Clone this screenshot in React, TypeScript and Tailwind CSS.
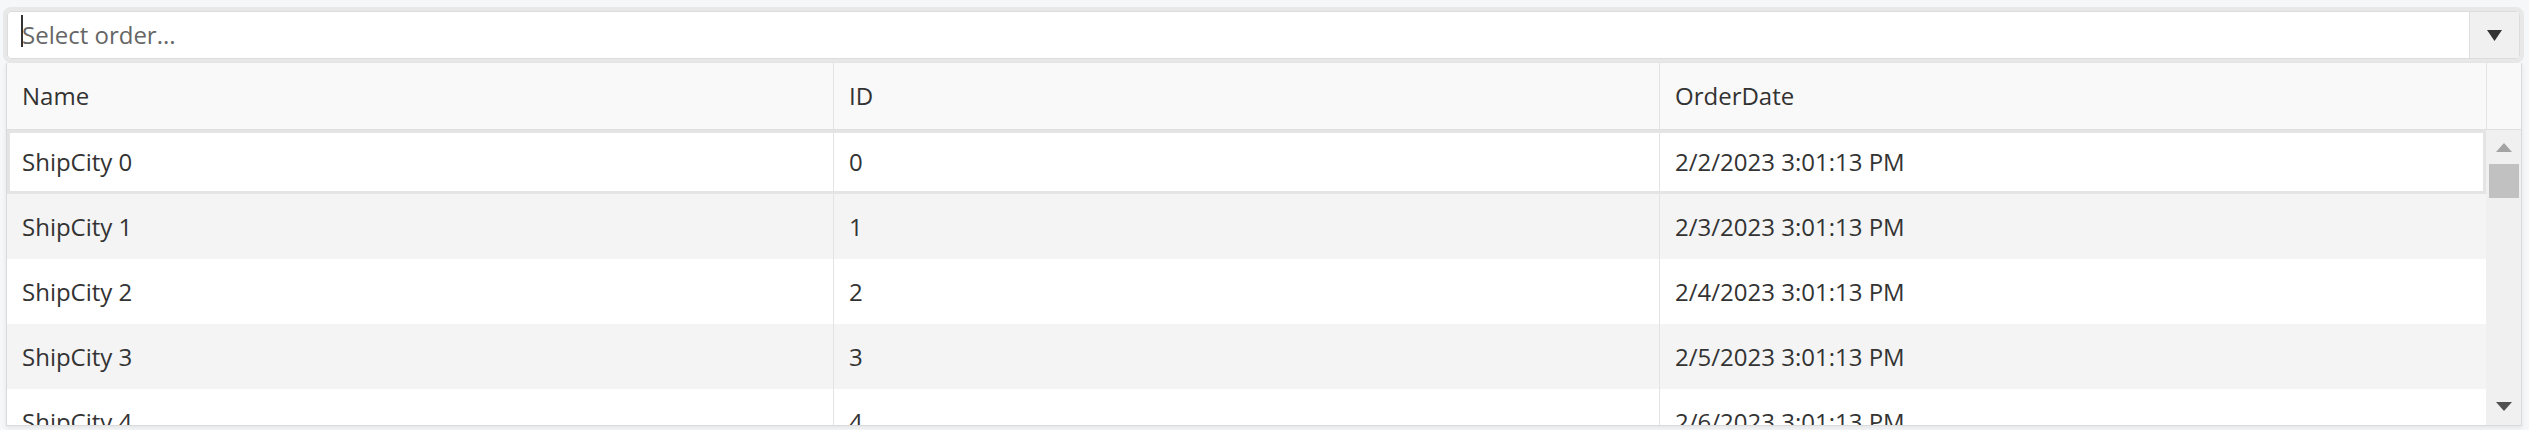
import React from 'react';

type Order = {
  name: string;
  id: number;
  orderDate: string;
};

const ORDERS: Order[] = Array.from({ length: 5 }, (_, i) => ({
  name: `ShipCity ${i}`,
  id: i,
  orderDate: `2/${i + 2}/2023 3:01:13 PM`,
}));

const COLUMNS = [
  { key: 'name', label: 'Name', width: 'w-[826px]' },
  { key: 'id', label: 'ID', width: 'w-[826px] border-l border-[#e3e3e3]' },
  { key: 'orderDate', label: 'OrderDate', width: 'w-[827px] border-l border-[#e3e3e3]' },
] as const;

function ComboInput() {
  return (
    <div className="ml-[3px] mr-[5px] h-[56px] rounded-[8px] border-4 border-[#e8e8e8]">
      <div className="flex h-full rounded-[4px] border border-[#dcdcdc] bg-white overflow-hidden">
        <div className="flex-1 flex items-center pl-[14px]">
          <span className="relative text-[#666] text-[24px] leading-none">
            {/* text caret */}
            <span className="absolute -left-[1px] top-[-8px] w-[2px] h-[32px] bg-[#333]" />
            Select order...
          </span>
        </div>
        <button
          type="button"
          className="w-[50px] flex items-center justify-center border-l border-[#dedede] bg-[#f0f0f0]"
        >
          <svg width="15" height="11" viewBox="0 0 15 11">
            <polygon points="0,0 15,0 7.5,11" fill="#333" />
          </svg>
        </button>
      </div>
    </div>
  );
}

function ScrollBar() {
  return (
    <div className="w-[35px] flex flex-col items-center bg-[#f0f0f0] pt-[13px] pb-[14px]">
      <svg width="16" height="9" viewBox="0 0 16 9">
        <polygon points="8,0 16,9 0,9" fill="#a3a3a3" />
      </svg>
      <div className="mt-[12px] w-[30px] h-[34px] bg-[#c1c1c1]" />
      <div className="flex-1" />
      <svg width="16" height="9" viewBox="0 0 16 9">
        <polygon points="0,0 16,0 8,9" fill="#505050" />
      </svg>
    </div>
  );
}

function OrderGrid() {
  return (
    <div className="ml-[6px] mr-[7px] border-x border-b border-[#dadada] bg-white shadow-[0_2px_5px_rgba(0,0,0,0.08)]">
      {/* Header */}
      <div className="flex h-[67px] bg-[#f9f9f9] border-b border-[#e0e0e0]">
        {COLUMNS.map((col) => (
          <div key={col.key} className={`${col.width} flex items-center pl-[15px] text-[#333]`}>
            {col.label}
          </div>
        ))}
        <div className="w-[35px] border-l border-[#e3e3e3]" />
      </div>

      {/* Body */}
      <div className="flex h-[295px] overflow-hidden">
        <div className="flex-1">
          {ORDERS.map((order, index) => (
            <div
              key={order.id}
              className={`flex ${index === 0 ? 'h-[64px] shadow-[inset_0_0_0_3px_#e4e4e4]' : 'h-[65px]'} ${
                index % 2 === 1 ? 'bg-[#f4f4f4]' : 'bg-white'
              }`}
            >
              <div className={`${COLUMNS[0].width} flex items-center pl-[15px] text-[#333]`}>{order.name}</div>
              <div className={`${COLUMNS[1].width} flex items-center pl-[15px] text-[#333]`}>{order.id}</div>
              <div className={`${COLUMNS[2].width} flex items-center pl-[15px] text-[#333]`}>{order.orderDate}</div>
            </div>
          ))}
        </div>
        <ScrollBar />
      </div>
    </div>
  );
}

export default function App() {
  return (
    <div className="h-[430px] overflow-hidden bg-[#f6f7f8] pt-[7px] text-[24px] font-['Open_Sans',sans-serif]">
      <ComboInput />
      <OrderGrid />
    </div>
  );
}
